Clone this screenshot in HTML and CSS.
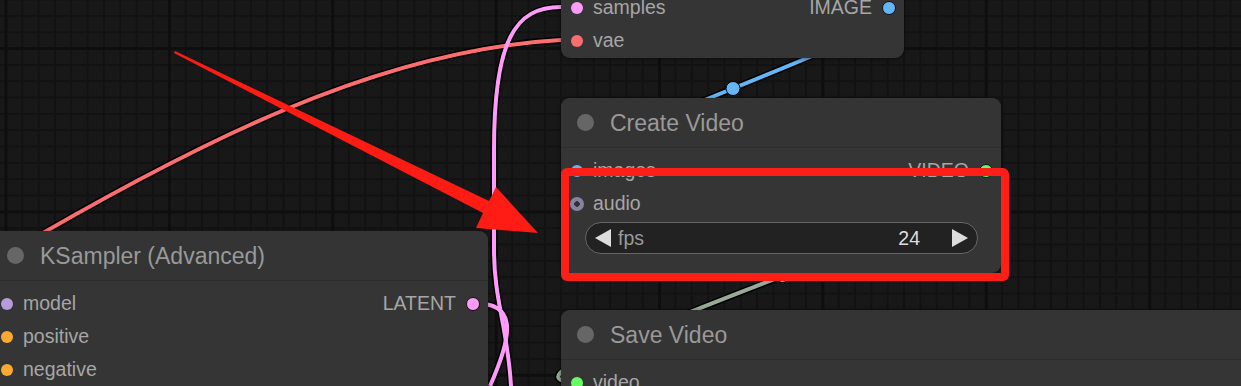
FILE: index.html
```html
<!DOCTYPE html>
<html lang="en">
<head>
    <meta charset="UTF-8">
    <meta name="viewport" content="width=device-width, initial-scale=1.0">
    <title>Workflow - Create Video</title>
    <link rel="stylesheet" href="styles.css">
</head>
<body>
    <div class="canvas">
        <!-- links are drawn under the nodes -->
        <svg class="links" width="1241" height="386" viewBox="0 0 1241 386">
            <g class="link-border">
                <path d="M0,258 C200,140 380,50 561,40"/>
                <path d="M561,7 C515,7 494,40 494,150 L494,250 C494,300 508,330 511,386"/>
                <path d="M474,303 C515,303 515,330 490,386"/>
                <path d="M889,7 C979,7 487,170 577,170"/>
                <path d="M988,170 C1128,170 437,382 577,382"/>
            </g>
            <path class="link link-vae" d="M0,258 C200,140 380,50 561,40"/>
            <path class="link link-latent" d="M561,7 C515,7 494,40 494,150 L494,250 C494,300 508,330 511,386"/>
            <path class="link link-latent" d="M474,303 C515,303 515,330 490,386"/>
            <path class="link link-image" d="M889,7 C979,7 487,170 577,170"/>
            <path class="link link-default" d="M988,170 C1128,170 437,382 577,382"/>
            <circle class="link-center image" cx="733" cy="88.5" r="7"/>
            <circle class="link-center default" cx="782.5" cy="276" r="6.5"/>
        </svg>

        <div class="node node-decode">
            <div class="node-title"><span class="title-dot"></span>VAE Decode</div>
            <div class="node-body">
                <div class="slot-row">
                    <span class="slot"><i class="dot dot-latent"></i>samples</span>
                    <span class="slot out">IMAGE<i class="dot dot-image"></i></span>
                </div>
                <div class="slot-row">
                    <span class="slot"><i class="dot dot-vae"></i>vae</span>
                </div>
            </div>
        </div>

        <div class="node node-create">
            <div class="node-title"><span class="title-dot"></span>Create Video</div>
            <div class="node-body">
                <div class="slot-row">
                    <span class="slot"><i class="dot dot-image"></i>images</span>
                    <span class="slot out">VIDEO<i class="dot dot-video"></i></span>
                </div>
                <div class="slot-row">
                    <span class="slot"><i class="dot dot-audio"></i>audio</span>
                </div>
                <div class="widget">
                    <svg class="arrow" width="16" height="18" viewBox="0 0 16 18"><path d="M0,9 L16,0 L16,18 Z"/></svg>
                    <span class="widget-name">fps</span>
                    <span class="widget-value">24</span>
                    <svg class="arrow" width="16" height="18" viewBox="0 0 16 18"><path d="M16,9 L0,0 L0,18 Z"/></svg>
                </div>
            </div>
        </div>

        <div class="node node-ksampler">
            <div class="node-title"><span class="title-dot"></span>KSampler (Advanced)</div>
            <div class="node-body">
                <div class="slot-row">
                    <span class="slot"><i class="dot dot-model"></i>model</span>
                    <span class="slot out">LATENT<i class="dot dot-latent"></i></span>
                </div>
                <div class="slot-row">
                    <span class="slot"><i class="dot dot-cond"></i>positive</span>
                </div>
                <div class="slot-row">
                    <span class="slot"><i class="dot dot-cond"></i>negative</span>
                </div>
            </div>
        </div>

        <div class="node node-save">
            <div class="node-title"><span class="title-dot"></span>Save Video</div>
            <div class="node-body">
                <div class="slot-row">
                    <span class="slot"><i class="dot dot-video"></i>video</span>
                </div>
            </div>
        </div>

        <!-- annotation drawn over the screenshot -->
        <svg class="markup" width="1241" height="386" viewBox="0 0 1241 386">
            <polygon points="175,51 489,201 496,187 538,233 476,228 483,213 174,53"/>
            <rect x="565" y="172" width="440" height="105" rx="2"/>
        </svg>
    </div>
</body>
</html>
```

FILE: styles.css
```css
body {
    margin: 0;
    background-color: #181818;
    font-family: 'Liberation Sans', Arial, sans-serif;
}
.canvas {
    position: relative;
    width: 1241px;
    height: 386px;
    overflow: hidden;
    background-color: #181818;
    background-image:
        linear-gradient(to right, #0e0e0e 3px, transparent 3px),
        linear-gradient(to bottom, #0e0e0e 3px, transparent 3px),
        linear-gradient(to right, #121212 2px, transparent 2px),
        linear-gradient(to bottom, #121212 2px, transparent 2px);
    background-size: 163.4px 163.4px, 163.4px 163.4px, 16.34px 16.34px, 16.34px 16.34px;
    background-position: 4.5px 47px, 4.5px 47px, 5px 47.6px, 5px 47.6px;
}
.links, .markup {
    position: absolute;
    left: 0;
    top: 0;
}
.markup {
    z-index: 5;
}
.link-border path {
    fill: none;
    stroke: #000;
    stroke-width: 7;
}
.link {
    fill: none;
    stroke-width: 4;
}
.link-vae { stroke: #ff6e6e; }
.link-latent { stroke: #ff9cf9; }
.link-image { stroke: #64b5f6; }
.link-default { stroke: #99aa99; }
.link-center {
    stroke: #000;
    stroke-width: 1;
}
.link-center.image { fill: #64b5f6; }
.link-center.default { fill: #99aa99; }
.markup polygon {
    fill: #ff1c14;
}
.markup rect {
    fill: none;
    stroke: #ff1f18;
    stroke-width: 8;
}

/* nodes */
.node {
    position: absolute;
    background: #353535;
    border-radius: 9px;
    box-shadow: 0 1px 4px rgba(0, 0, 0, 0.45);
    overflow: hidden;
}
.node-decode { left: 561px; top: -65px; width: 343px; }
.node-create { left: 561px; top: 98px; width: 440px; }
.node-ksampler { left: -9px; top: 231px; width: 497px; height: 200px; }
.node-save { left: 561px; top: 310px; width: 720px; height: 120px; }

.node-title {
    display: flex;
    align-items: center;
    gap: 16px;
    height: 48px;
    padding: 1px 0 0 16px;
    border-bottom: 1px solid #2c2c2c;
    background: #343434;
    color: #999;
    font-size: 23px;
}
.title-dot {
    width: 17px;
    height: 17px;
    margin-top: -1px;
    border-radius: 50%;
    background: #666;
}
.node-body {
    padding: 6px 0 1px;
}
.slot-row {
    display: flex;
    justify-content: space-between;
    align-items: center;
    height: 33px;
    padding: 0 8px 0 10px;
    color: #a6a6a6;
    font-size: 19.5px;
}
.slot {
    display: flex;
    align-items: center;
    gap: 10px;
}
.dot {
    display: block;
    width: 12px;
    height: 12px;
    border-radius: 50%;
    box-sizing: border-box;
}
.slot.out .dot {
    width: 14px;
    height: 14px;
    border: 1.5px solid #111;
}
.dot-latent { background: #ff9cf9; }
.dot-image { background: #64b5f6; }
.dot-vae { background: #ff6e6e; }
.dot-video { background: #66ff66; }
.dot-model { background: #b39ddb; }
.dot-cond { background: #ffa931; }
.dot-audio {
    width: 14px;
    height: 14px;
    margin-left: -1px;
    margin-right: -1px;
    background: radial-gradient(circle, #2e2e38 2.5px, #85849c 3px);
}

/* number widget */
.widget {
    display: flex;
    align-items: center;
    height: 32px;
    box-sizing: border-box;
    margin: 2px 23px 18px 24px;
    padding: 0 9px;
    border: 1px solid #666;
    border-radius: 16px;
    background: #222;
    font-size: 19.5px;
}
.arrow path {
    fill: #ddd;
}
.widget-name {
    flex: 1;
    margin-left: 7px;
    color: #999;
}
.widget-value {
    margin-right: 32px;
    color: #ddd;
}
```
